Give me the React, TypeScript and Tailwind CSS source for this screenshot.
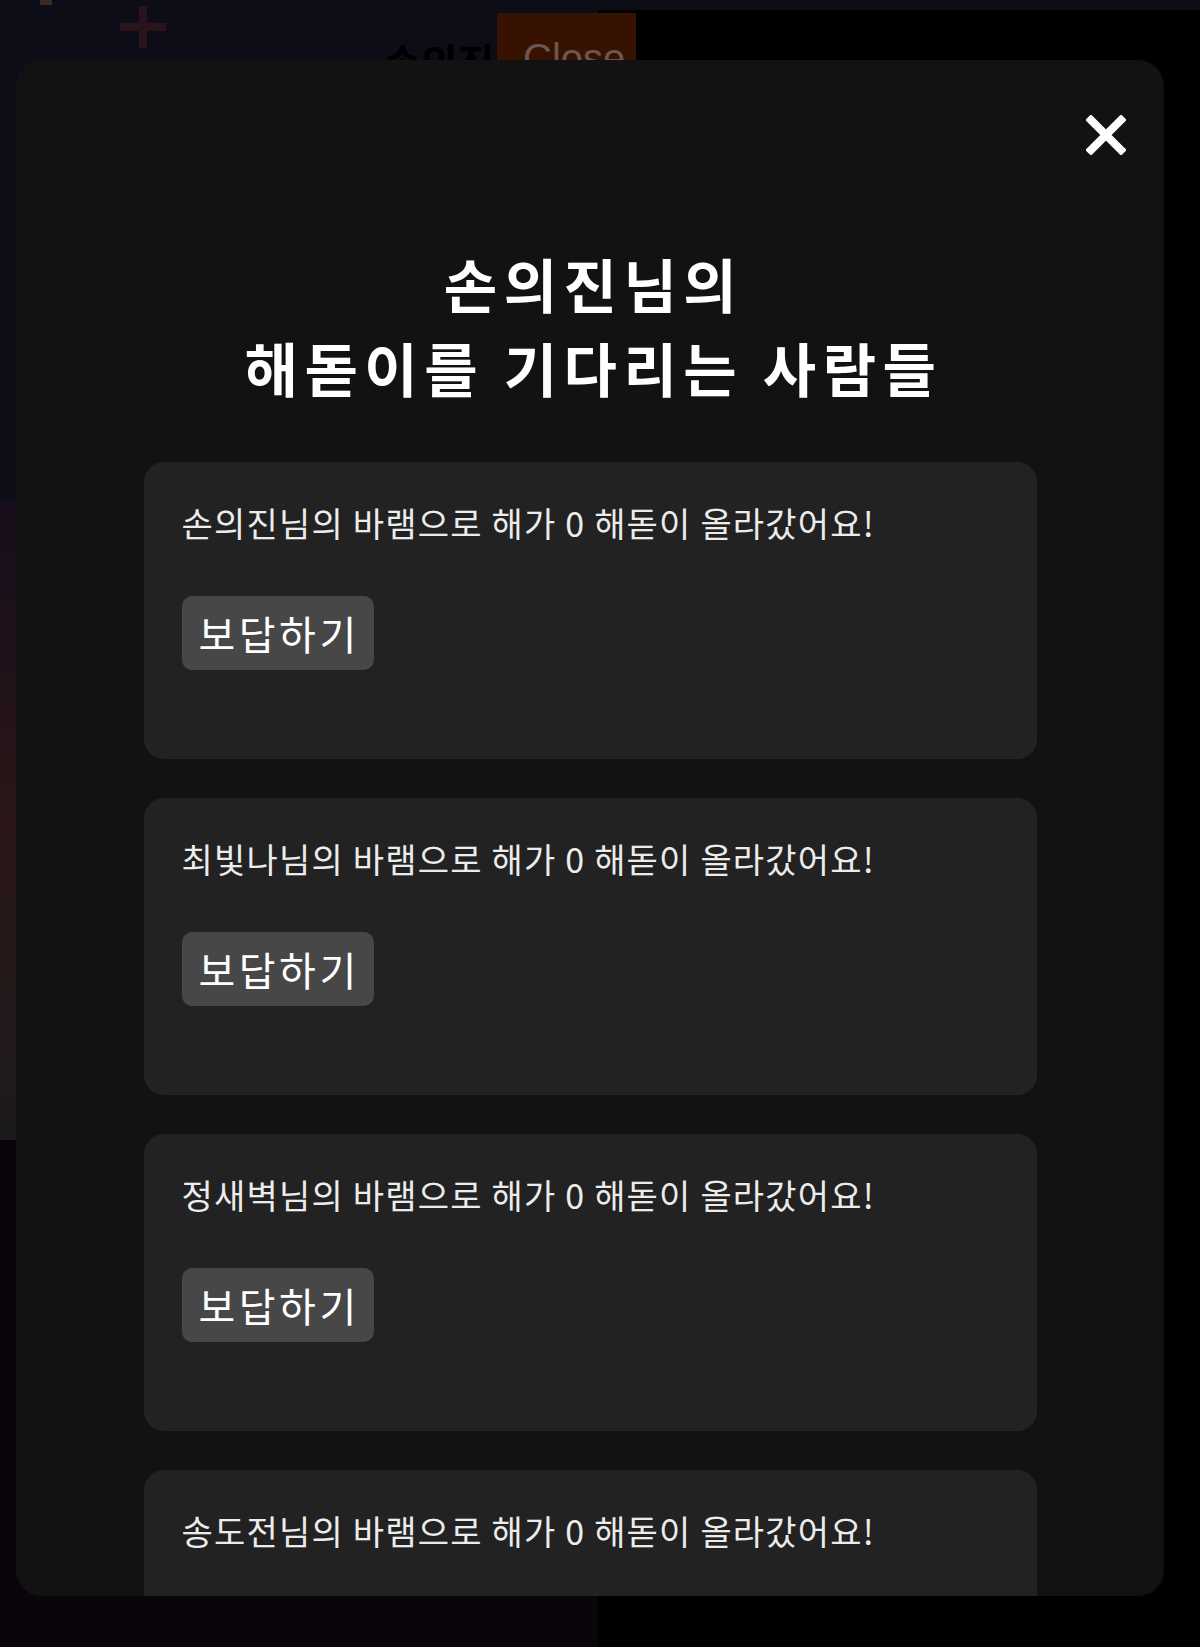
import React from "react";

const names = ["손의진", "최빛나", "정새벽", "송도전"];

function CloseIcon() {
  return (
    <svg width="40" height="40" viewBox="0 0 40 40" fill="none">
      <path d="M5 5 L35 35 M35 5 L5 35" stroke="#ffffff" strokeWidth="8" strokeLinecap="square" />
    </svg>
  );
}

export default function App() {
  return (
    <div
      className="relative w-[1200px] h-[1647px] overflow-hidden bg-black"
      style={{ fontFamily: '"Noto Sans CJK KR", "Noto Sans", sans-serif' }}
    >
      {/* background page (dimmed) */}
      <div className="flex flex-col w-full h-full">
        <div className="h-[10px] w-full bg-[#0c0d17]" />
        <div className="flex flex-1">
          <div className="relative w-[598px] h-full bg-[#0c0d16] flex flex-col">
            <div className="h-[490px] bg-[#0c0d16]" />
            <div className="h-[640px] w-[16px] bg-gradient-to-b from-[#160d1c] via-[#2a1616] to-[#1c1a1c]" />
            <div className="flex-1 bg-[#0a050a]" />
          </div>
          <div className="flex-1 bg-black" />
        </div>
      </div>

      {/* background leftovers over the page */}
      <div className="absolute left-[40px] top-0 w-[12px] h-[5px] bg-[#3a2a24]" />
      <div className="absolute left-[120px] top-[6px] w-[46px] h-[42px]">
        <div className="absolute left-[19px] top-0 w-[8px] h-[42px] bg-[#2a141c]" />
        <div className="absolute left-0 top-[17px] w-[46px] h-[8px] bg-[#2a141c]" />
      </div>
      <div className="absolute left-[384px] top-[36px] text-[40px] font-bold leading-[50px] text-black">
        손의진
      </div>
      <div
        className="absolute left-[497px] top-[13px] w-[139px] h-[60px] bg-[#381200] pl-[26px] pt-[20px] text-[40px] leading-[50px] text-[#6b5650]"
        style={{ fontFamily: '"Liberation Sans", Arial, sans-serif' }}
      >
        Close
      </div>

      {/* modal */}
      <div className="absolute left-[16px] top-[60px] w-[1148px] h-[1536px] rounded-[26px] bg-[#121212] overflow-hidden flex flex-col">
        <div className="flex justify-end pt-[55px] pr-[38px]">
          <CloseIcon />
        </div>
        <h1 className="mt-[86px] pl-[7px] text-center text-[58px] leading-[84px] font-bold tracking-[6.5px] text-white">
          손의진님의
          <br />
          해돋이를 기다리는 사람들
        </h1>
        <div className="mt-[53px] flex flex-col gap-[39px] items-center">
          {names.map((n) => (
            <div
              key={n}
              className="w-[893px] h-[297px] shrink-0 rounded-[20px] bg-[#222222] pl-[38px] pt-[36px] flex flex-col items-start"
            >
              <p className="text-[34px] leading-[50px] tracking-[1.2px] text-[#ececec] whitespace-nowrap">
                {n}님의 바램으로 해가 0 해돋이 올라갔어요!
              </p>
              <button className="mt-[48px] h-[74px] pl-[17px] pr-[14px] rounded-[10px] bg-[#474747] text-[40px] leading-[74px] tracking-[3.5px] text-white">
                보답하기
              </button>
            </div>
          ))}
        </div>
      </div>
    </div>
  );
}
